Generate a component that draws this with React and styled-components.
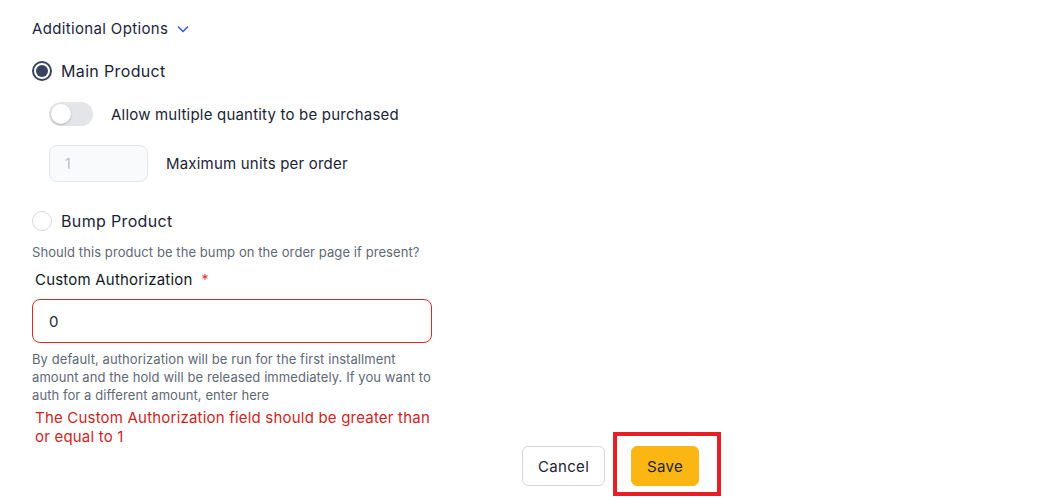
import React from "react";
import styled, { createGlobalStyle } from "styled-components";

const Global = createGlobalStyle`
  html, body {
    margin: 0;
    background: #fff;
    font-family: Inter, "Noto Sans", sans-serif;
  }
`;

const Cover = styled.div`
  box-sizing: border-box;
  min-height: 498px;
  padding: 18px 0 11px 32px;
  color: #1b2437;
  letter-spacing: 0.2px;
`;

const SectionToggle = styled.div`
  display: flex;
  align-items: center;
  gap: 9px;
  height: 22px;
  font-size: 15px;
  line-height: 22px;
  letter-spacing: 0.35px;
  color: #1b2540;
`;

const RadioRow = styled.label`
  display: flex;
  align-items: center;
  gap: 9px;
  height: 20px;
  margin-top: ${(p) => p.$top}px;
  font-size: 16px;
  letter-spacing: 0.35px;
`;

const RadioDot = styled.span`
  box-sizing: border-box;
  width: 20px;
  height: 20px;
  border-radius: 50%;
  border: ${(p) => (p.$on ? "2px solid #3a4262" : "1px solid #d5d9e0")};
  display: flex;
  align-items: center;
  justify-content: center;
  &::after {
    content: "";
    display: ${(p) => (p.$on ? "block" : "none")};
    width: 12px;
    height: 12px;
    border-radius: 50%;
    background: #3a4262;
  }
`;

const SubRow = styled.div`
  display: flex;
  align-items: center;
  gap: ${(p) => p.$gap}px;
  margin: ${(p) => p.$top}px 0 0 17px;
  font-size: 15px;
`;

const Switch = styled.span`
  position: relative;
  width: 44px;
  height: 24px;
  border-radius: 12px;
  background: #e3e5e8;
  &::after {
    content: "";
    position: absolute;
    left: 2px;
    top: 2px;
    width: 20px;
    height: 20px;
    border-radius: 50%;
    background: #fff;
    box-shadow: 0 1px 2px rgba(0, 0, 0, 0.25);
  }
`;

const SmallInput = styled.div`
  box-sizing: border-box;
  width: 99px;
  height: 37px;
  padding-left: 15px;
  display: flex;
  align-items: center;
  border: 1px solid #e3e6ea;
  border-radius: 8px;
  background: #f9fafb;
  color: #b8bec8;
  font-size: 14px;
`;

const Helper = styled.p`
  margin: ${(p) => p.$top}px 0 0;
  width: ${(p) => p.$w || "auto"};
  font-size: 13px;
  line-height: 18px;
  letter-spacing: 0.08px;
  color: #5f6878;
`;

const FieldLabel = styled.div`
  margin: 9px 0 0 3px;
  font-size: 15px;
  line-height: 20px;
  color: #111827;
  span {
    color: #e03131;
    margin-left: 9px;
    font-size: 14px;
  }
`;

const TextInput = styled.div`
  box-sizing: border-box;
  width: 400px;
  height: 44px;
  margin-top: 9px;
  padding-left: 16px;
  display: flex;
  align-items: center;
  border: 1px solid #d52b20;
  border-radius: 8px;
  font-size: 15px;
  color: #1f2937;
`;

const ErrorText = styled.p`
  margin: 4px 0 0 3px;
  width: 400px;
  font-size: 15px;
  line-height: 19px;
  color: #cf1f1f;
`;

const Footer = styled.div`
  display: flex;
  justify-content: flex-end;
  align-items: center;
  gap: 26px;
  width: 667px;
`;

const Button = styled.button`
  box-sizing: border-box;
  height: 40px;
  padding: 0 15px;
  border-radius: 6px;
  border: 1px solid ${(p) => (p.$primary ? "#fbb614" : "#d4d8de")};
  background: ${(p) => (p.$primary ? "#fbb614" : "#fff")};
  font-family: Inter, sans-serif;
  font-size: 15px;
  letter-spacing: 0.3px;
  color: #1b2437;
`;

/* annotation box drawn round the Save button */
const Highlight = styled.div`
  display: flex;
  padding: 10px 18px 6px 14px;
  margin: -14px -22px -10px -18px;
  border: 4px solid #e61e25;
`;

const Chevron = () => (
  <svg width="12" height="8" viewBox="0 0 12 8" fill="none">
    <path d="M1 1.5l5 5 5-5" stroke="#2f55e4" strokeWidth="1.5" />
  </svg>
);

export default function App() {
  return (
    <Cover>
      <Global />
      <SectionToggle>
        Additional Options <Chevron />
      </SectionToggle>
      <RadioRow $top={21}>
        <RadioDot $on />
        Main Product
      </RadioRow>
      <SubRow $top={21} $gap={18}>
        <Switch />
        Allow multiple quantity to be purchased
      </SubRow>
      <SubRow $top={19} $gap={18}>
        <SmallInput>1</SmallInput>
        Maximum units per order
      </SubRow>
      <RadioRow $top={29}>
        <RadioDot />
        Bump Product
      </RadioRow>
      <Helper $top={12}>Should this product be the bump on the order page if present?</Helper>
      <FieldLabel>
        Custom Authorization<span>*</span>
      </FieldLabel>
      <TextInput>0</TextInput>
      <Helper $top={7} $w="404px">
        By default, authorization will be run for the first installment amount and the hold will be
        released immediately. If you want to auth for a different amount, enter here
      </Helper>
      <ErrorText>The Custom Authorization field should be greater than or equal to 1</ErrorText>
      <Footer>
        <Button>Cancel</Button>
        <Highlight>
          <Button $primary>Save</Button>
        </Highlight>
      </Footer>
    </Cover>
  );
}
